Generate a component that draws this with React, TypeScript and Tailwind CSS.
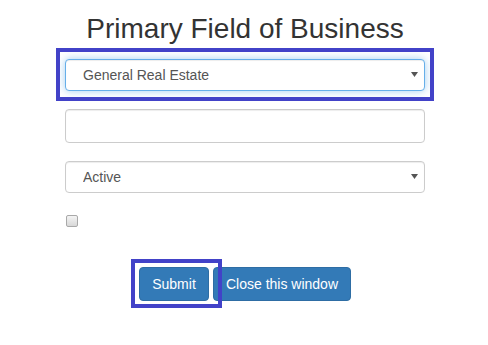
import React from 'react'

function Caret() {
  return (
    <svg
      className="pointer-events-none absolute right-[7px] top-[13px]"
      width="7"
      height="5"
      viewBox="0 0 7 5"
      aria-hidden="true"
    >
      <path d="M0 0h7L3.5 5z" fill="#555" />
    </svg>
  )
}

function SelectBox({
  value,
  focused,
}: {
  value: string
  focused?: boolean
}) {
  return (
    <div className="relative">
      <select
        defaultValue={value}
        className={`block h-[32px] w-full appearance-none rounded-[4px] border bg-white pl-[17px] pr-6 text-[14px] text-[#555] outline-none ${
          focused
            ? 'border-[#66afe9] shadow-[inset_0_1px_1px_rgba(0,0,0,0.075),0_0_8px_rgba(102,175,233,0.6)]'
            : 'border-[#ccc] shadow-[inset_0_1px_1px_rgba(0,0,0,0.075)]'
        }`}
      >
        <option>{value}</option>
      </select>
      <Caret />
    </div>
  )
}

export default function App() {
  return (
    <div className="min-h-[345px] bg-white font-['Liberation_Sans',Arial,sans-serif] text-[#333]">
      <div className="ml-[65px] w-[360px] pt-[13px]">
        <h2 className="text-center text-[28px] font-medium leading-[31px] text-[#333]">
          Primary Field of Business
        </h2>

        {/* Field select, highlighted */}
        <div className="relative mt-[15px]">
          <SelectBox value="General Real Estate" focused />
          <div className="pointer-events-none absolute -left-[9px] -right-[9px] -top-[11px] -bottom-[10px] border-4 border-[#4242c8]" />
        </div>

        <input
          type="text"
          className="mt-[18px] block h-[34px] w-full rounded-[4px] border border-[#ccc] bg-white px-3 text-[14px] text-[#555] shadow-[inset_0_1px_1px_rgba(0,0,0,0.075)] outline-none"
        />

        <div className="mt-[18px]">
          <SelectBox value="Active" />
        </div>

        <div className="mt-[22px] pl-[1px]">
          <span className="block h-[12px] w-[12px] rounded-[2px] border border-[#a9a9a9] bg-gradient-to-b from-[#f4f4f4] to-[#d8d8d8]" />
        </div>

        <div className="mt-[40px] flex justify-center gap-[4px]">
          <div className="relative">
            <button className="h-[34px] w-[70px] rounded-[4px] border border-[#2e6da4] bg-[#337ab7] text-[14px] text-white">
              Submit
            </button>
            <div className="pointer-events-none absolute -left-[8px] -right-[13px] -top-[8px] -bottom-[7px] border-4 border-[#4242c8]" />
          </div>
          <button className="h-[34px] w-[138px] rounded-[4px] border border-[#2e6da4] bg-[#337ab7] text-[14px] text-white">
            Close this window
          </button>
        </div>
      </div>
    </div>
  )
}
